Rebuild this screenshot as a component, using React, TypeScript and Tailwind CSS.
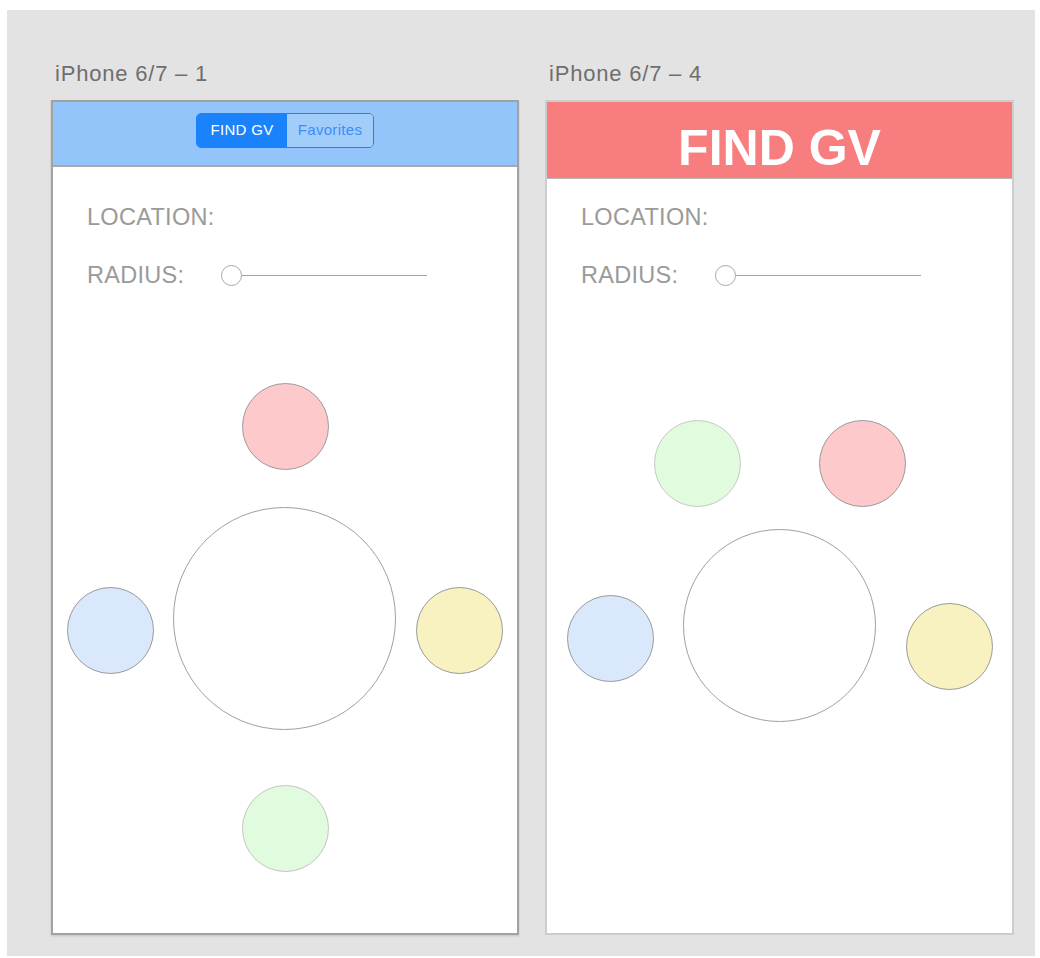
const font = { fontFamily: '"Liberation Sans", Arial, sans-serif' };

function Circle({ className }: { className: string }) {
  return <div className={`absolute rounded-full border ${className}`} />;
}

function Field({ label, slider, gap }: { label: string; slider?: boolean; gap?: boolean }) {
  return (
    <div className={`flex items-center h-[28px] ${gap ? "mt-[30px]" : ""}`}>
      <span className="text-[23.5px] leading-[28px] tracking-[0.3px] text-[#9a9a9a] w-[134px]">{label}</span>
      {slider && (
        <div className="flex items-center">
          <div className="w-[21px] h-[21px] rounded-full border-[1.5px] border-[#a8a8a8] bg-white" />
          <div className="w-[185px] h-px bg-[#a3a3a3]" />
        </div>
      )}
    </div>
  );
}

export default function App() {
  return (
    <div className="min-h-screen bg-white" style={font}>
      <div className="ml-[7px] mt-[10px] w-[1028px] h-[946px] bg-[#e3e3e3] flex gap-[26px] pl-[44px] pt-[50px]">
        {/* first artboard */}
        <div className="flex flex-col">
          <div className="h-[40px] pl-[4px] text-[22px] leading-[28px] tracking-[0.8px] text-[#6e6e6e]">iPhone 6/7 – 1</div>
          <div className="relative w-[468px] h-[835px] bg-white border-2 border-[#a2a2a2] shadow-[0_1px_2px_rgba(0,0,0,0.15)] flex flex-col">
            <div className="h-[65px] bg-[#94c5fa] border-b-2 border-[#a8a8a8] flex justify-center pt-[11px]">
              <div className="flex h-[35px] rounded-[5px] border border-[#1a82fb] overflow-hidden text-[15px]">
                <div className="w-[90px] bg-[#1a82fb] text-white flex items-center justify-center tracking-[0.3px]">FIND GV</div>
                <div className="w-[86px] bg-[#a2cdfb] text-[#3a8df5] flex items-center justify-center tracking-[0.3px]">Favorites</div>
              </div>
            </div>
            <div className="pl-[34px] pt-[36px]">
              <Field label="LOCATION:" />
              <Field label="RADIUS:" slider gap />
            </div>
            <Circle className="left-[189px] top-[281px] w-[87px] h-[87px] bg-[#fdc9cb] border-[#9c9c9c]" />
            <Circle className="left-[120px] top-[405px] w-[223px] h-[223px] bg-white border-[#a0a0a0]" />
            <Circle className="left-[14px] top-[485px] w-[87px] h-[87px] bg-[#dae8fc] border-[#9a9a9a]" />
            <Circle className="left-[363px] top-[485px] w-[87px] h-[87px] bg-[#f8f2c1] border-[#9a9a9a]" />
            <Circle className="left-[189px] top-[683px] w-[87px] h-[87px] bg-[#e1fbdf] border-[#c4c4c4]" />
          </div>
        </div>

        {/* second artboard */}
        <div className="flex flex-col">
          <div className="h-[40px] pl-[4px] text-[22px] leading-[28px] tracking-[0.8px] text-[#6e6e6e]">iPhone 6/7 – 4</div>
          <div className="relative w-[469px] h-[835px] bg-white border-2 border-[#cdcdcd] flex flex-col">
            <div className="h-[77px] bg-[#f77d7f] border-b border-[#b8b8b8] flex items-center justify-center pt-[16px]">
              <span className="text-[50px] font-bold text-white leading-none">FIND GV</span>
            </div>
            <div className="pl-[34px] pt-[24px]">
              <Field label="LOCATION:" />
              <Field label="RADIUS:" slider gap />
            </div>
            <Circle className="left-[107px] top-[318px] w-[87px] h-[87px] bg-[#e1fbdf] border-[#c8c8c8]" />
            <Circle className="left-[272px] top-[318px] w-[87px] h-[87px] bg-[#fdc9cb] border-[#9a9a9a]" />
            <Circle className="left-[136px] top-[427px] w-[193px] h-[193px] bg-white border-[#a0a0a0]" />
            <Circle className="left-[20px] top-[493px] w-[87px] h-[87px] bg-[#dae8fc] border-[#9a9a9a]" />
            <Circle className="left-[359px] top-[501px] w-[87px] h-[87px] bg-[#f8f2c1] border-[#9a9a9a]" />
          </div>
        </div>
      </div>
    </div>
  );
}
